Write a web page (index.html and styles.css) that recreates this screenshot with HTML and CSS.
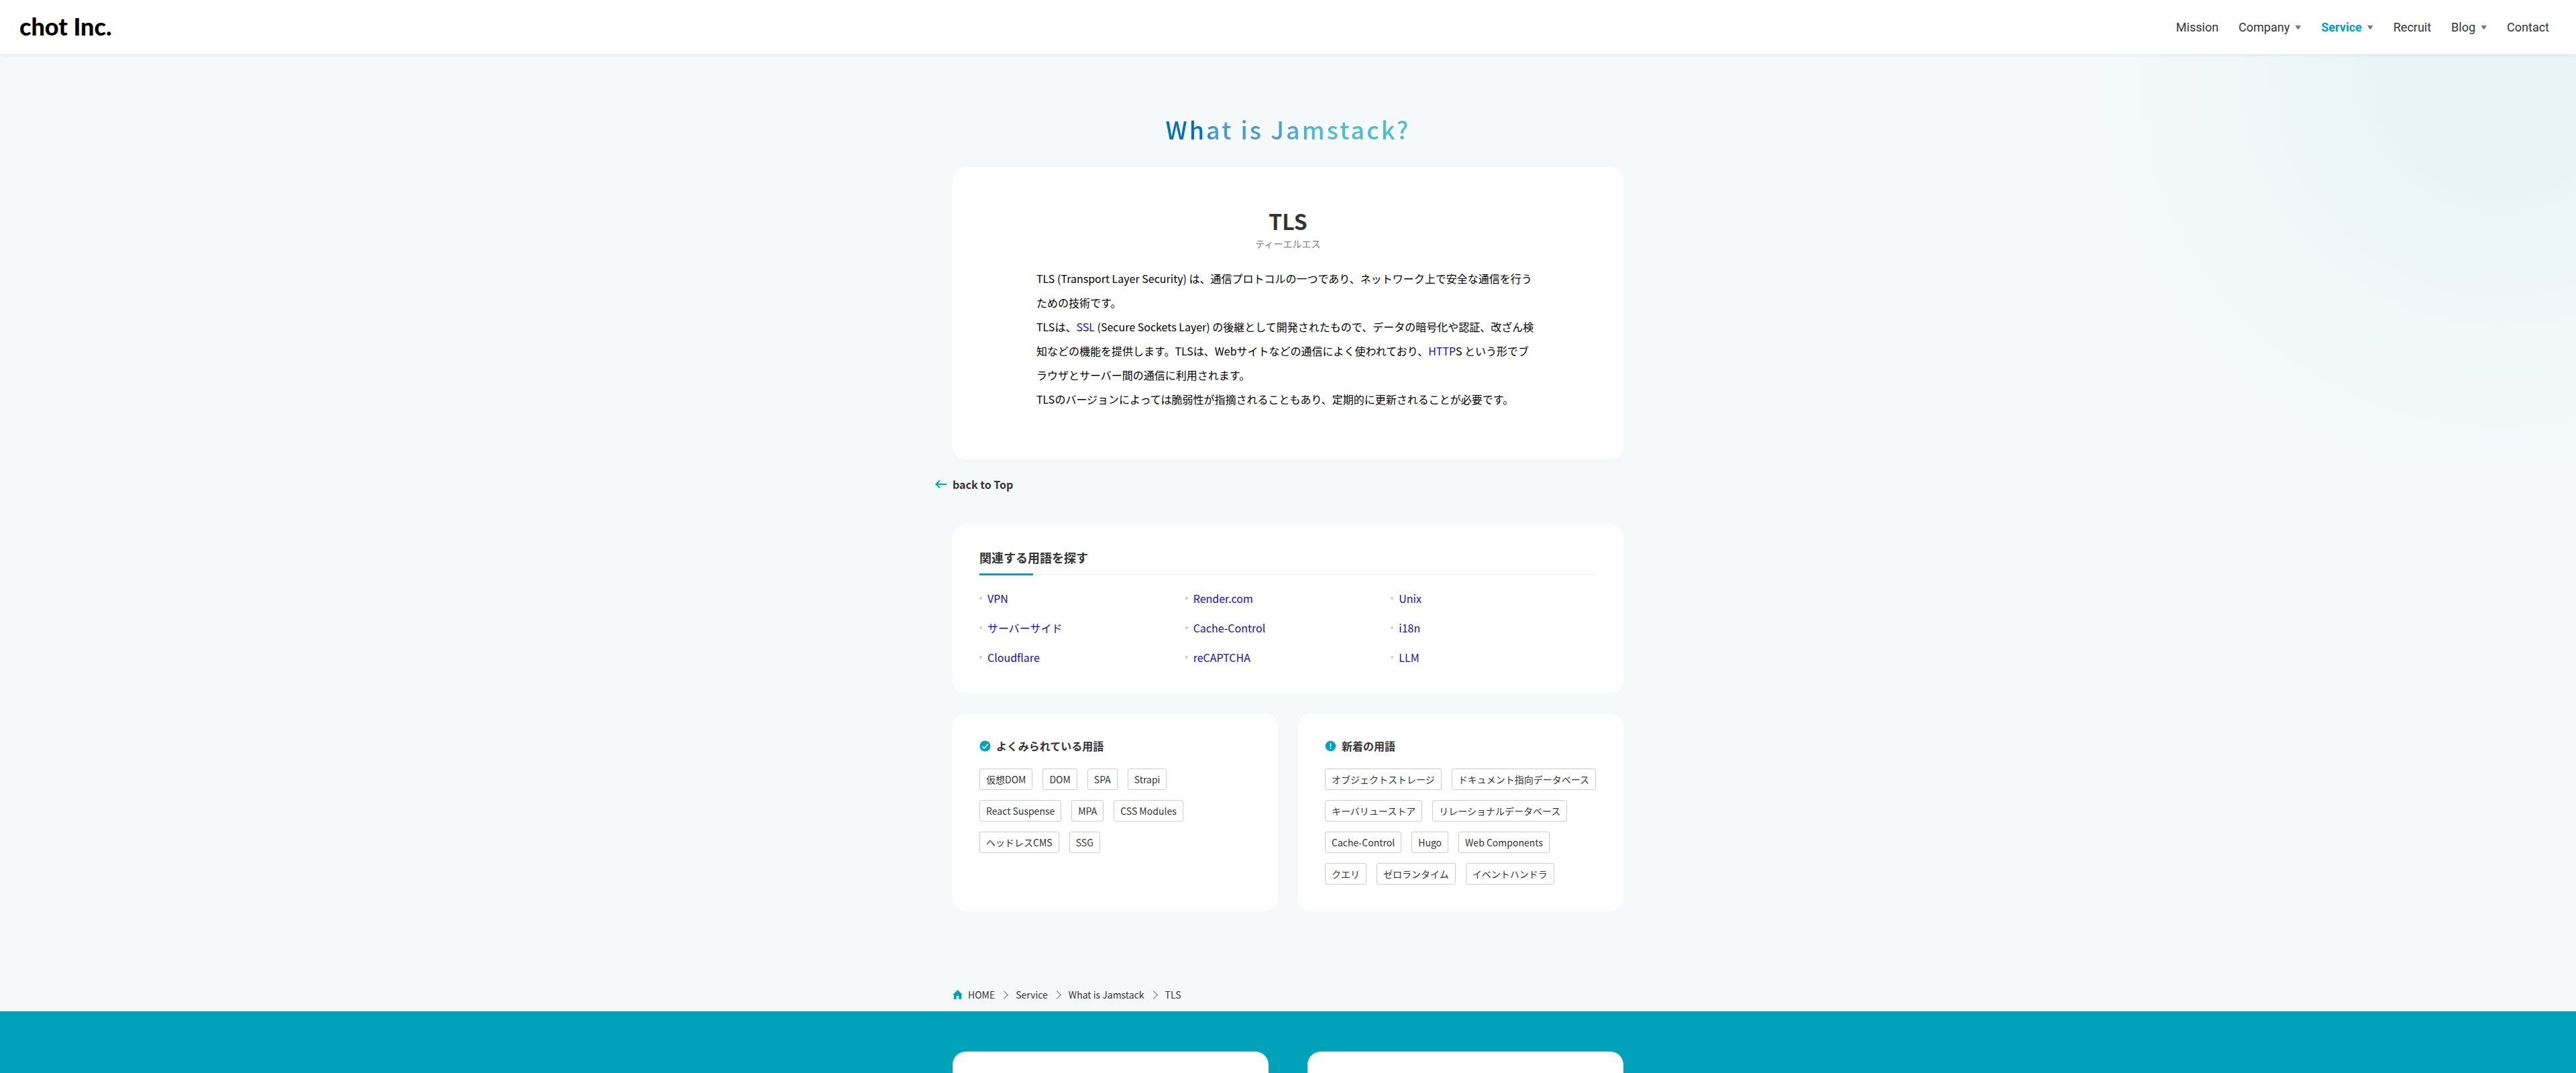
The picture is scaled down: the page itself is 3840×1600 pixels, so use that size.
FILE: index.html
```html
<!DOCTYPE html>
<html lang="ja">
<head>
<meta charset="utf-8">
<title>TLS | What is Jamstack? | chot Inc.</title>
<meta name="viewport" content="width=device-width, initial-scale=1">
<link rel="stylesheet" href="styles.css">
</head>
<body>
<header class="site-header">
  <a class="logo" href="#">chot Inc.</a>
  <nav class="nav">
    <a href="#">Mission</a>
    <a class="has-menu" href="#">Company</a>
    <a class="has-menu is-current" href="#">Service</a>
    <a href="#">Recruit</a>
    <a class="has-menu" href="#">Blog</a>
    <a href="#">Contact</a>
  </nav>
</header>

<main class="page">
  <div class="container">
    <p class="page-title"><span>What is Jamstack?</span></p>

    <article class="card term">
      <h1 class="term-name">TLS</h1>
      <p class="term-reading">ティーエルエス</p>
      <div class="term-body">
        <p>TLS (Transport Layer Security) は、通信プロトコルの一つであり、ネットワーク上で安全な通信を行う<br>ための技術です。</p>
        <p>TLSは、<a href="#">SSL</a> (Secure Sockets Layer) の後継として開発されたもので、データの暗号化や認証、改ざん検<br>知などの機能を提供します。TLSは、Webサイトなどの通信によく使われており、<a href="#">HTTP</a>S という形でブ<br>ラウザとサーバー間の通信に利用されます。</p>
        <p>TLSのバージョンによっては脆弱性が指摘されることもあり、定期的に更新されることが必要です。</p>
      </div>
    </article>

    <a class="back" href="#">
      <svg width="18" height="14" viewBox="0 0 18 14" fill="none" stroke="currentColor" stroke-width="2"><path d="M7 1.500 1.500 7 7 12.500M1.500 7H17"/></svg>
      back to Top
    </a>

    <section class="card related">
      <h2 class="related-title">関連する用語を探す</h2>
      <ul class="related-list">
        <li><a href="#">VPN</a></li>
        <li><a href="#">Render.com</a></li>
        <li><a href="#">Unix</a></li>
        <li><a href="#">サーバーサイド</a></li>
        <li><a href="#">Cache-Control</a></li>
        <li><a href="#">i18n</a></li>
        <li><a href="#">Cloudflare</a></li>
        <li><a href="#">reCAPTCHA</a></li>
        <li><a href="#">LLM</a></li>
      </ul>
    </section>

    <div class="pair">
      <section class="card words">
        <h2 class="words-title">
          <svg width="17" height="17" viewBox="0 0 17 17"><circle cx="8.500" cy="8.500" r="8" fill="#00a1ba"/><path d="m4 8.800 3 3 6-6.300" fill="none" stroke="#fff" stroke-width="1.600"/></svg>
          よくみられている用語
        </h2>
        <ul class="tags">
          <li><a href="#">仮想DOM</a></li>
          <li><a href="#">DOM</a></li>
          <li><a href="#">SPA</a></li>
          <li><a href="#">Strapi</a></li>
          <li><a href="#">React Suspense</a></li>
          <li><a href="#">MPA</a></li>
          <li><a href="#">CSS Modules</a></li>
          <li><a href="#">ヘッドレスCMS</a></li>
          <li><a href="#">SSG</a></li>
        </ul>
      </section>
      <section class="card words">
        <h2 class="words-title">
          <svg width="17" height="17" viewBox="0 0 17 17"><path fill="#00a1ba" d="M8.500 1.300 10.800.4l1.400 2.100 2.500.3.100 2.500 2 1.500-1 1.700 1 1.700-2 1.500-.1 2.500-2.500.3-1.400 2.100-2.300-.9-2.300.9-1.400-2.100-2.500-.3-.1-2.500-2-1.500 1-1.700-1-1.700 2-1.500.1-2.500 2.500-.3L6.200.4z"/><path fill="#fff" d="M7.600 4.200h1.800v5.300H7.600zM7.600 11h1.800v1.800H7.600z"/></svg>
          新着の用語
        </h2>
        <ul class="tags">
          <li><a href="#">オブジェクトストレージ</a></li>
          <li><a href="#">ドキュメント指向データベース</a></li>
          <li><a href="#">キーバリューストア</a></li>
          <li><a href="#">リレーショナルデータベース</a></li>
          <li><a href="#">Cache-Control</a></li>
          <li><a href="#">Hugo</a></li>
          <li><a href="#">Web Components</a></li>
          <li><a href="#">クエリ</a></li>
          <li><a href="#">ゼロランタイム</a></li>
          <li><a href="#">イベントハンドラ</a></li>
        </ul>
      </section>
    </div>

    <nav class="breadcrumb" aria-label="breadcrumb">
      <ol>
        <li><a class="home" href="#"><svg width="15" height="14" viewBox="0 0 15 14"><path fill="#00a1ba" d="M7.500 0 15 7.500h-2V14H9.300V9H5.700v5H2V7.500H0z"/></svg>HOME</a></li>
        <li><a href="#">Service</a></li>
        <li><a href="#">What is Jamstack</a></li>
        <li>TLS</li>
      </ol>
    </nav>
  </div>
</main>

<footer class="site-footer">
  <div class="container footer-cards">
    <div class="footer-card"></div>
    <div class="footer-card"></div>
  </div>
</footer>
</body>
</html>
```
FILE: styles.css
```css
* { box-sizing: border-box; margin: 0; padding: 0; }

body {
  display: flex;
  flex-direction: column;
  min-height: 100vh;
  background: #f5f9fa;
  color: #333;
  font-family: "Noto Sans CJK JP", sans-serif;
  font-size: 16px;
}

a { color: inherit; text-decoration: none; }
ul, ol { list-style: none; }
svg { display: block; flex: none; }

.site-header {
  display: flex;
  align-items: center;
  justify-content: space-between;
  position: relative;
  height: 81px;
  padding: 0 40px 0 29px;
  background: #fff;
  box-shadow: 0 0 6px rgba(0, 0, 0, .12);
}
.logo { padding-bottom: 4px; color: #000; font-family: Lato, sans-serif; font-size: 36px; font-weight: 900; line-height: 40px; }

.nav { display: flex; gap: 30px; font-family: Roboto, sans-serif; font-size: 18px; line-height: 24px; }
.has-menu { display: flex; align-items: center; gap: 8px; }
.has-menu::after {
  content: "";
  width: 9px;
  height: 6px;
  background: #777;
  clip-path: polygon(0 0, 100% 0, 60% 100%, 40% 100%);
}
.is-current { color: #00a1ba; font-weight: 700; }

.page {
  background: radial-gradient(circle at calc(100% - 113px) 19px, #e8f5f6 0, #e8f5f7 190px, #edf6f8 300px, #f0f8fa 400px, #f5f9fa 600px);
}
.container { width: 100%; max-width: 1000px; margin: 0 auto; }

.page-title {
  padding: 86px 0 32px;
  font-size: 36px;
  font-weight: 500;
  line-height: 50px;
  letter-spacing: 3px;
  text-align: center;
}
.page-title span {
  background: linear-gradient(90deg, #0071bc 14%, #4b9bd3 20%, #4b9bd3 45%, #4bbdcf 60%, #4bbdcf);
  -webkit-background-clip: text;
  background-clip: text;
  color: transparent;
}

.card { background: #fff; border-radius: 20px; }

.term { padding: 56px 125px 72px; }
.term-name { font-size: 32px; font-weight: 700; line-height: 48px; text-align: center; }
.term-reading { color: #777; font-size: 14px; line-height: 20px; text-align: center; }
.term-body { padding-top: 24px; color: #000; line-height: 36px; }
.term-body a, .related-list a { color: #1a0dab; }

.back {
  display: flex;
  align-items: center;
  gap: 8px;
  width: max-content;
  margin: 25px 0 47px -26px;
  font-weight: 700;
  line-height: 24px;
}
.back svg { color: #00a1ba; }

.related { padding: 35px 40px 32px; }
.related-title {
  position: relative;
  padding-bottom: 9px;
  border-bottom: 1px solid #eee;
  font-size: 18px;
  line-height: 31px;
}
.related-title::after {
  content: "";
  position: absolute;
  left: 0;
  bottom: -2px;
  width: 80px;
  height: 3px;
  background: #00a1ba;
}
.related-list { display: grid; grid-template-columns: repeat(3, 1fr); padding-top: 13px; line-height: 44px; }
.related-list li { display: flex; align-items: center; gap: 8px; }
.related-list li::before { content: ""; width: 4px; height: 4px; border-radius: 50%; background: #ccc; }

.pair { display: grid; grid-template-columns: 1fr 1fr; gap: 30px; margin-top: 30px; }
.words { padding: 36px 40px 40px; }
.words-title { display: flex; align-items: center; gap: 8px; font-size: 16px; line-height: 24px; }
.tags { display: flex; flex-wrap: wrap; gap: 15px; padding-top: 22px; font-size: 14px; line-height: 30px; }
.tags a { display: block; padding: 0 9px; border: 1px solid #ccc; border-radius: 3px; }

.breadcrumb { padding: 112px 0 13px; font-size: 14px; line-height: 24px; }
.breadcrumb ol { display: flex; }
.breadcrumb li { display: flex; align-items: center; }
.breadcrumb li + li::before {
  content: "";
  width: 8px;
  height: 8px;
  margin: 0 13px 0 9px;
  border: solid #666;
  border-width: 1px 1px 0 0;
  transform: rotate(45deg);
}
.home { display: flex; align-items: center; gap: 8px; }

.site-footer { display: flex; flex: 1; padding-top: 60px; background: #00a1ba; }
.footer-cards { display: grid; grid-template-columns: 1fr 1fr; gap: 58px; min-height: 30px; }
.footer-card { background: #fff; border-radius: 20px 20px 0 0; }
```
